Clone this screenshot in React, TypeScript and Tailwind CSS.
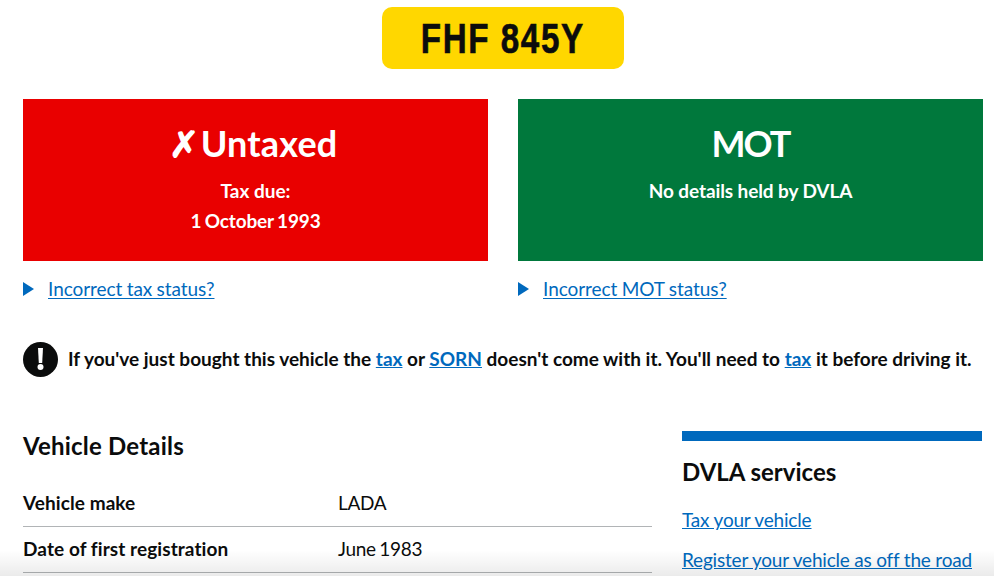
const font = "font-['Lato','Noto_Sans',sans-serif]";

function Disclosure({ label }: { label: string }) {
    return (
        <div className="flex items-center h-[28px] mt-[14px]">
            <span className="w-0 h-0 border-y-[7px] border-y-transparent border-l-[11px] border-l-[#0069bd]" />
            <a href="#" className="ml-[14px] text-[19px] text-[#0069bd] underline underline-offset-2 tracking-[-0.05px] [word-spacing:-0.5px]">
                {label}
            </a>
        </div>
    );
}

function Row({ label, value }: { label: string; value: string }) {
    return (
        <div className="flex h-[46px] pb-[1px] items-center border-b border-[#b1b4b6] text-[19px]">
            <span className="w-[315px] font-bold tracking-[0.08px]">{label}</span>
            <span className="tracking-[-0.3px] [word-spacing:-1px]">{value}</span>
        </div>
    );
}

function WarningIcon() {
    return (
        <svg width="35" height="35" viewBox="0 0 35 35" className="shrink-0">
            <circle cx="17.5" cy="17.5" r="17.5" fill="#0b0c0c" />
            <path d="M15 6h5l-.8 15h-3.4z" fill="#fff" />
            <circle cx="17.5" cy="25" r="3" fill="#fff" />
        </svg>
    );
}

export default function App() {
    return (
        <div className={`relative w-[994px] h-[576px] overflow-hidden bg-white text-[#0b0c0c] ${font}`}>
            <div className="pt-[7px] flex justify-center">
                <div className="w-[242px] h-[62px] ml-[12px] rounded-[10px] bg-[#ffd700] flex items-center justify-center font-['Liberation_Sans',sans-serif] font-bold text-[42px] tracking-[2px] text-[#0b0c0c] [-webkit-text-stroke:0.6px_#0b0c0c]">
                    <span className="inline-block scale-x-[0.79] whitespace-nowrap">FHF 845Y</span>
                </div>
            </div>

            <div className="mt-[30px] px-[23px] grid grid-cols-[465px_465px] gap-x-[30px]">
                <div>
                    <div className="h-[162px] bg-[#e90000] text-white flex flex-col items-center pt-[22px]">
                        <div className="pr-[4px] text-[36px] leading-[44px] font-bold tracking-[0.2px] [word-spacing:-8px]">✗ Untaxed</div>
                        <div className="mt-[11px] text-[19px] leading-[30px] font-bold">Tax due:</div>
                        <div className="text-[19px] leading-[30px] font-bold tracking-[-0.15px] [word-spacing:-1px]">1 October 1993</div>
                    </div>
                    <Disclosure label="Incorrect tax status?" />
                </div>
                <div>
                    <div className="h-[162px] bg-[#00783c] text-white flex flex-col items-center pt-[22px]">
                        <div className="text-[36px] leading-[44px] font-bold tracking-[-2px]">MOT</div>
                        <div className="mt-[11px] text-[19px] leading-[30px] font-bold tracking-[-0.1px]">No details held by DVLA</div>
                    </div>
                    <Disclosure label="Incorrect MOT status?" />
                </div>
            </div>

            <div className="mt-[38px] ml-[23px] flex items-center h-[36px]">
                <WarningIcon />
                <p className="ml-[10px] text-[19px] font-bold whitespace-nowrap">
                    If you've just bought this vehicle the <a href="#" className="text-[#0069bd] underline">tax</a> or{' '}
                    <a href="#" className="text-[#0069bd] underline">SORN</a> doesn't come with it. You'll need to{' '}
                    <a href="#" className="text-[#0069bd] underline">tax</a> it before driving it.
                </p>
            </div>

            <div className="mt-[54px] ml-[23px] flex">
                <div className="w-[629px] pt-[2px]">
                    <h2 className="text-[24px] leading-[26px] font-bold tracking-[0.2px]">Vehicle Details</h2>
                    <div className="mt-[22px]">
                        <Row label="Vehicle make" value="LADA" />
                        <Row label="Date of first registration" value="June 1983" />
                    </div>
                </div>
                <div className="ml-[30px] w-[300px] border-t-[10px] border-[#0069bd] pt-[16px]">
                    <h2 className="text-[24px] leading-[30px] font-bold">DVLA services</h2>
                    <div className="mt-[21px] flex flex-col gap-[16px] text-[19px] leading-[24px] text-[#0069bd] underline tracking-[-0.2px]">
                        <a href="#">Tax your vehicle</a>
                        <a href="#" className="whitespace-nowrap">Register your vehicle as off the road</a>
                    </div>
                </div>
            </div>

            <div className="absolute inset-x-0 bottom-0 h-[26px] bg-gradient-to-b from-transparent to-black/[0.08]" />
        </div>
    );
}
